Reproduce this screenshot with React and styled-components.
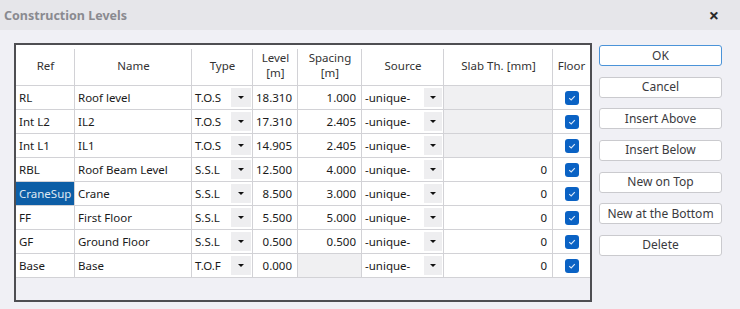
import React from 'react'
import styled, { createGlobalStyle } from 'styled-components'

const Global = createGlobalStyle`
    html, body {
        margin: 0;
        padding: 0;
        background: #f0f0f5;
    }
    body {
        font-family: "Noto Sans", "Open Sans", sans-serif;
        font-size: 11.5px;
        color: #1a1a1a;
    }
`

const Window = styled.div`
    width: 740px;
    height: 309px;
    display: flex;
    flex-direction: column;
    background: #f0f0f5;
    overflow: hidden;
`

const TitleBar = styled.div`
    height: 30px;
    flex-shrink: 0;
    display: flex;
    align-items: center;
    justify-content: space-between;
    padding: 0 21px 0 4px;
    background: #e6e6ea;
`

const Title = styled.div`
    font-size: 12.5px;
    font-weight: 700;
    color: #8a8a90;
`

const Close = styled.div`
    font-size: 18px;
    font-weight: 700;
    color: #2a2a2a;
    line-height: 1;
`

const Body = styled.div`
    flex: 1;
    display: flex;
    align-items: flex-start;
    padding: 13px 0 0 14px;
    gap: 7px;
`

const Grid = styled.div`
    width: 574px;
    height: 255px;
    border: 2px solid #4e4e52;
    background: #f0f0f5;
    display: grid;
    grid-template-columns: 59px 117px 61px 45px 64px 82px 109px 37px;
    grid-auto-rows: 24px;
    grid-template-rows: 41px;
    align-content: start;
`

const HeadCell = styled.div`
    position: relative;
    background: #fff;
    display: flex;
    align-items: center;
    justify-content: center;
    text-align: center;
    line-height: 15px;
    color: #333;
    white-space: pre;
    border-bottom: 1px solid #d2d2d6;
    &::after {
        content: '';
        display: ${({ $last }) => ($last ? 'none' : 'block')};
        position: absolute;
        right: 0;
        top: 4px;
        bottom: 0;
        width: 1px;
        background: #d2d2d6;
    }
`

const Cell = styled.div`
    display: flex;
    align-items: center;
    justify-content: ${({ $align }) => ($align === 'right' ? 'flex-end' : $align === 'center' ? 'center' : 'flex-start')};
    padding: ${({ $align }) => ($align === 'right' ? '0 5px 0 0' : $align === 'center' ? '0' : '0 0 0 3px')};
    background: ${({ $selected, $disabled }) => ($selected ? '#0d5ea6' : $disabled ? '#f0f0f2' : '#fff')};
    color: ${({ $selected }) => ($selected ? '#dfe8f2' : '#1a1a1a')};
    border-right: ${({ $last }) => ($last ? 'none' : '1px solid #d2d2d6')};
    border-bottom: 1px solid #d2d2d6;
    white-space: nowrap;
    overflow: hidden;
`

const ComboCell = styled(Cell)`
    justify-content: space-between;
    padding: 2px 1px 2px 3px;
`

const ArrowBox = styled.div`
    width: ${({ $w }) => $w}px;
    align-self: stretch;
    background: #eeeef0;
    display: flex;
    align-items: center;
    justify-content: center;
`

const Arrow = styled.div`
    width: 0;
    height: 0;
    border-left: 3px solid transparent;
    border-right: 3px solid transparent;
    border-top: 3px solid #111;
`

const Check = styled.div`
    width: 14px;
    height: 14px;
    border-radius: 3px;
    background: #0a62c4;
    display: flex;
    align-items: center;
    justify-content: center;
`

const Buttons = styled.div`
    display: flex;
    flex-direction: column;
    gap: 10.67px;
    padding-top: 2px;
`

const Button = styled.button`
    width: 123px;
    height: 21px;
    box-sizing: border-box;
    border: 1px solid ${({ $primary }) => ($primary ? '#4b93d8' : '#cacace')};
    border-radius: 3px;
    background: #fff;
    font-family: inherit;
    font-size: 12px;
    color: #3a3a3e;
    padding: 0;
    line-height: 1;
`

const headers = ['Ref', 'Name', 'Type', 'Level\n[m]', 'Spacing\n[m]', 'Source', 'Slab Th. [mm]', 'Floor']

const rows = [
    { ref: 'RL', name: 'Roof level', type: 'T.O.S', level: '18.310', spacing: '1.000', slab: null },
    { ref: 'Int L2', name: 'IL2', type: 'T.O.S', level: '17.310', spacing: '2.405', slab: null },
    { ref: 'Int L1', name: 'IL1', type: 'T.O.S', level: '14.905', spacing: '2.405', slab: null },
    { ref: 'RBL', name: 'Roof Beam Level', type: 'S.S.L', level: '12.500', spacing: '4.000', slab: '0' },
    { ref: 'CraneSup', name: 'Crane', type: 'S.S.L', level: '8.500', spacing: '3.000', slab: '0', selected: true },
    { ref: 'FF', name: 'First Floor', type: 'S.S.L', level: '5.500', spacing: '5.000', slab: '0' },
    { ref: 'GF', name: 'Ground Floor', type: 'S.S.L', level: '0.500', spacing: '0.500', slab: '0' },
    { ref: 'Base', name: 'Base', type: 'T.O.F', level: '0.000', spacing: null, slab: '0' },
]

const buttons = ['OK', 'Cancel', 'Insert Above', 'Insert Below', 'New on Top', 'New at the Bottom', 'Delete']

const CheckMark = () => (
    <Check>
        <svg width="10" height="10" viewBox="0 0 10 10">
            <path d="M2.2 5.2 L4.2 7 L7.8 3.2" fill="none" stroke="#dce8f7" strokeWidth="1.1" />
        </svg>
    </Check>
)

const App = () => {
    return (
        <Window>
            <Global />
            <TitleBar>
                <Title>Construction Levels</Title>
                <Close>×</Close>
            </TitleBar>
            <Body>
                <Grid>
                    {headers.map((h, i) => (
                        <HeadCell key={h} $last={i === headers.length - 1}>{h}</HeadCell>
                    ))}
                    {rows.map((r) => (
                        <React.Fragment key={r.ref}>
                            <Cell $selected={r.selected}>{r.ref}</Cell>
                            <Cell>{r.name}</Cell>
                            <ComboCell>
                                {r.type}
                                <ArrowBox $w={20}><Arrow /></ArrowBox>
                            </ComboCell>
                            <Cell $align="right">{r.level}</Cell>
                            <Cell $align="right" $disabled={!r.spacing}>{r.spacing}</Cell>
                            <ComboCell>
                                -unique-
                                <ArrowBox $w={18}><Arrow /></ArrowBox>
                            </ComboCell>
                            <Cell $align="right" $disabled={!r.slab}>{r.slab}</Cell>
                            <Cell $align="center" $last>
                                <CheckMark />
                            </Cell>
                        </React.Fragment>
                    ))}
                </Grid>
                <Buttons>
                    {buttons.map((b) => (
                        <Button key={b} $primary={b === 'OK'}>{b}</Button>
                    ))}
                </Buttons>
            </Body>
        </Window>
    )
}

export default App
